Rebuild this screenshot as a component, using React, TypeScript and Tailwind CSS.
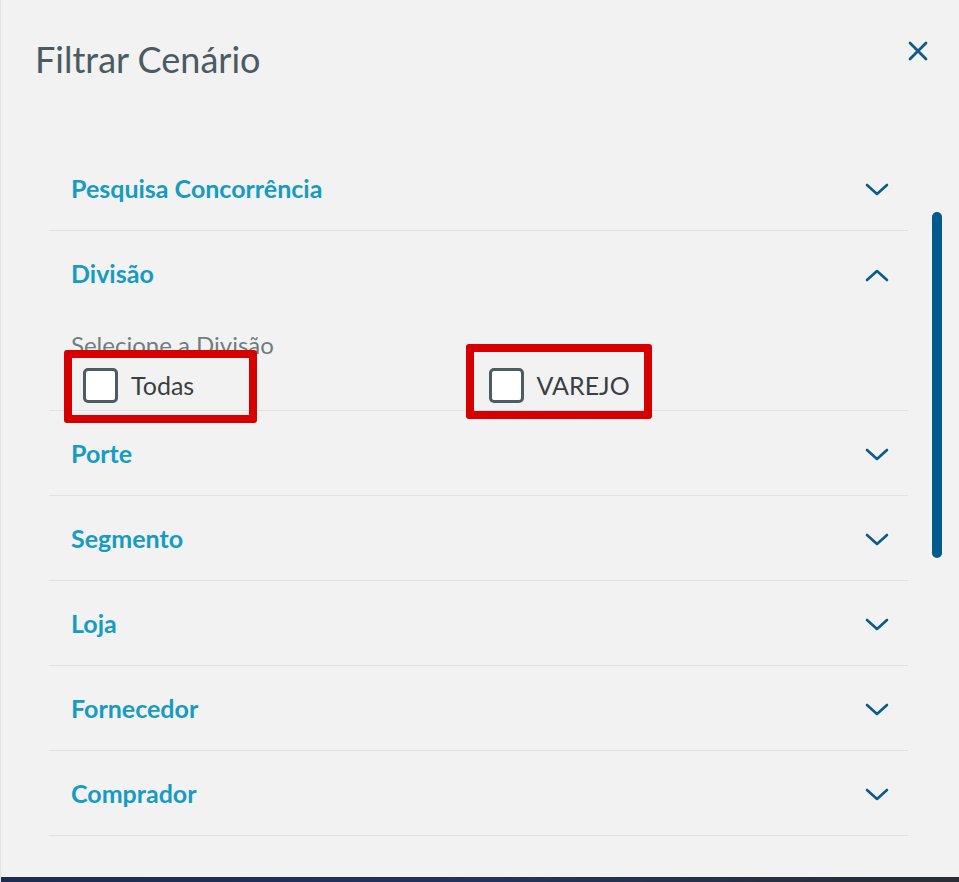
import React from 'react';

const Chevron = ({ up = false }: { up?: boolean }) => (
  <svg width="24" height="14" viewBox="0 0 24 14" className="text-[#0b5a8a]">
    <path
      d={up ? 'M2 12 L12 3 L22 12' : 'M2 2 L12 11 L22 2'}
      fill="none"
      stroke="currentColor"
      strokeWidth="2.6"
      strokeLinecap="round"
      strokeLinejoin="round"
    />
  </svg>
);

const Check = ({ label }: { label: string }) => (
  <label className="flex items-center gap-[13px] cursor-pointer">
    <span className="w-[35px] h-[35px] rounded-[5px] border-[3px] border-[#4b5c63] bg-white" />
    <span className="text-[25px] leading-[30px] text-[#3a3f42]">{label}</span>
  </label>
);

const Row = ({ title, open = false, children }: { title: string; open?: boolean; children?: React.ReactNode }) => (
  <div className="border-b border-[#e2e2e2]">
    <div className="h-[84px] flex items-center justify-between pl-[22px] pr-[19px]">
      <span className="text-[25px] leading-[30px] font-bold text-[#169bc2]">{title}</span>
      <span className="pt-[4px]"><Chevron up={open} /></span>
    </div>
    {children}
  </div>
);

const App: React.FC = () => {
  const rows = ['Porte', 'Segmento', 'Loja', 'Fornecedor', 'Comprador'];

  return (
    <div className="relative w-[959px] h-[882px] bg-[#f2f2f2] overflow-hidden border-l border-[#e4e4e4]" style={{ fontFamily: "Lato, 'Open Sans', sans-serif" }}>
      <div className="flex items-start justify-between pl-[34px] pr-[30px] pt-[36px]">
        <h1 className="text-[36px] leading-[46px] text-[#4a5b61]">Filtrar Cenário</h1>
        <button className="mt-[4px] text-[#0b5a8a]">
          <svg width="22" height="22" viewBox="0 0 22 22">
            <path d="M3 3 L19 19 M19 3 L3 19" stroke="currentColor" strokeWidth="2.8" strokeLinecap="round" />
          </svg>
        </button>
      </div>

      <div className="flex mt-[64px]">
        <div className="ml-[48px] w-[859px]">
          <Row title="Pesquisa Concorrência" />
          <Row title="Divisão" open>
            <div className="pl-[22px] pt-[16px] pb-[5px]">
              <p className="text-[24px] leading-[28px] text-[#6f7d82]">Selecione a Divisão</p>
              <div className="grid grid-cols-2 mt-[6px] h-[40px] items-center">
                <div className="pl-[12px]"><Check label="Todas" /></div>
                <div className="-ml-[1px]"><Check label="VAREJO" /></div>
              </div>
            </div>
          </Row>
          {rows.map((r) => (
            <Row key={r} title={r} />
          ))}
        </div>
        <div className="ml-[24px] mt-[66px] w-[10px] h-[346px] rounded-full bg-[#005a8c]" />
      </div>

      {/* annotation highlights */}
      <div className="absolute left-[63px] top-[350px] w-[193px] h-[73px] border-[8px] border-[#d60000] rounded-[3px]" />
      <div className="absolute left-[465px] top-[344px] w-[186px] h-[75px] border-[8px] border-[#d60000] rounded-[3px]" />

      <div className="absolute left-0 right-0 bottom-0 h-[5px] bg-gradient-to-r from-[#1d2c4f] via-[#22325a] to-[#2a2d33]" />
    </div>
  );
};

export default App;
